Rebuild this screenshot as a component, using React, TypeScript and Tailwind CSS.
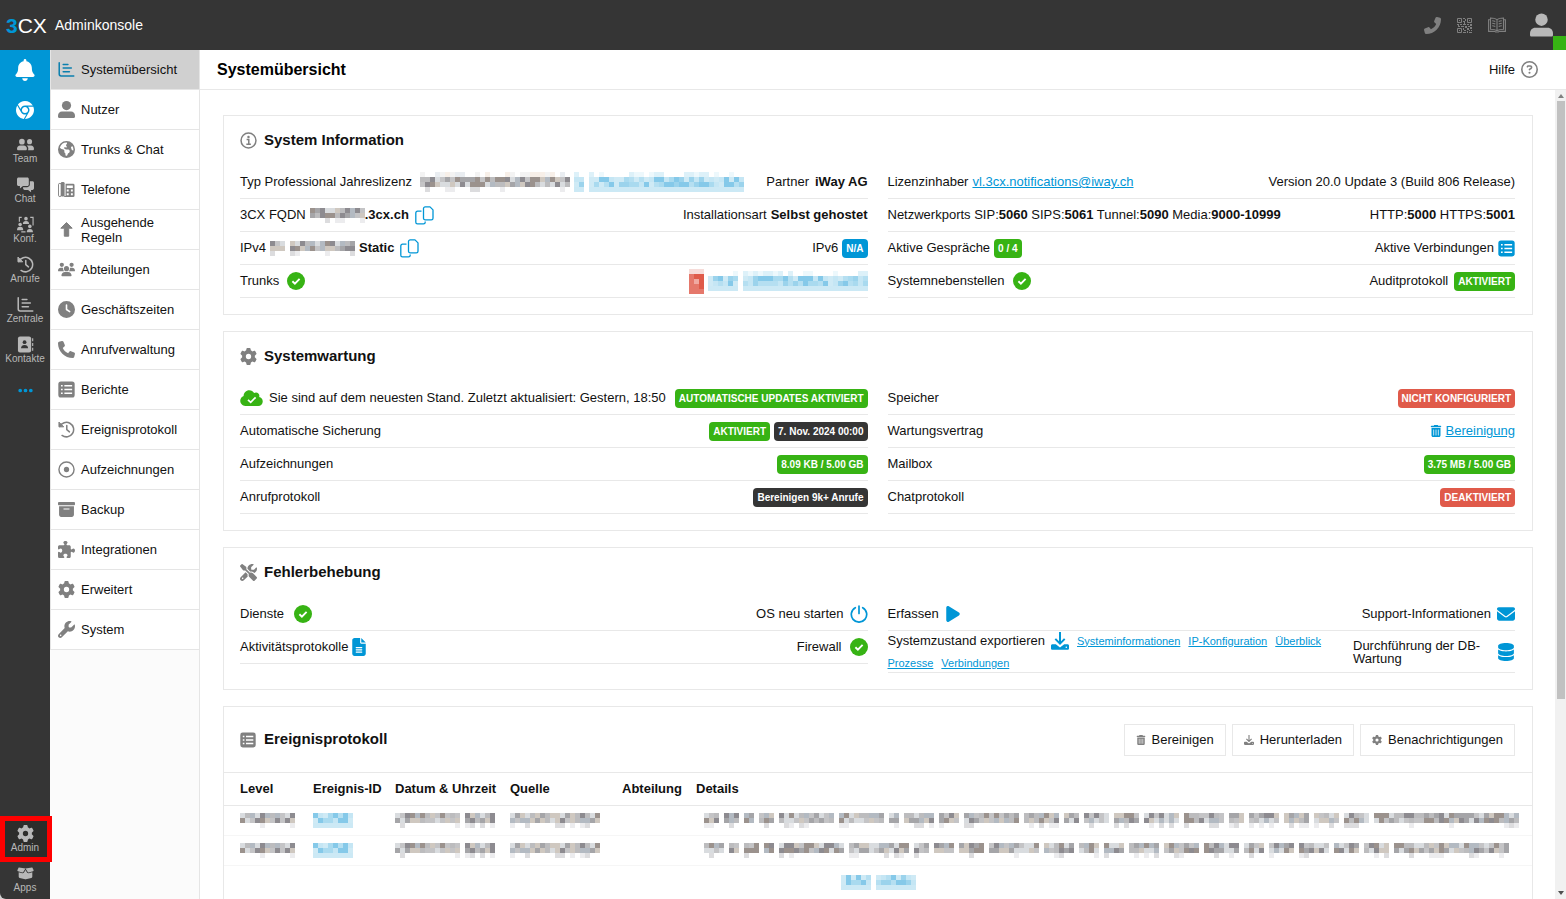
import type { ComponentType, ReactNode } from "react";
import {
  FaBell,
  FaBoxArchive,
  FaBoxOpen,
  FaChrome,
  FaClock,
  FaCloud,
  FaDatabase,
  FaEarthAmericas,
  FaEllipsis,
  FaEnvelope,
  FaFileLines,
  FaGear,
  FaPhone,
  FaPlay,
  FaPuzzlePiece,
  FaRegCircleQuestion,
  FaScrewdriverWrench,
  FaTrashCan,
  FaUsers,
  FaWrench,
} from "react-icons/fa6";

type IconProps = { className?: string };
type Icon = ComponentType<IconProps>;

/* ---------- icons ---------- */

function ChartIcon({ className }: IconProps) {
  return (
    <svg viewBox="0 0 18 18" className={className} fill="none" stroke="currentColor" strokeWidth="1.6" strokeLinecap="round" aria-hidden="true">
      <path d="M1.3 1.8v12a2 2 0 0 0 2 2h13.4M5.5 3.6h5M5.5 7.4h8.6M5.5 11.4h6.6" />
    </svg>
  );
}

function UserIcon({ className }: IconProps) {
  return (
    <svg viewBox="0 0 17 17" className={className} fill="currentColor" aria-hidden="true">
      <circle cx="8.5" cy="4.6" r="4.6" />
      <path d="M0 14.8C0 12.400 1.600 10.600 4 10.600h9c2.400 0 4 1.800 4 4.200v1c0 .7-.5 1.200-1.200 1.200H1.200C.5 17 0 16.500 0 15.800z" />
    </svg>
  );
}

function TeamIcon({ className }: IconProps) {
  return (
    <svg viewBox="0 0 18 18" className={className} fill="currentColor" aria-hidden="true">
      <circle cx="5.200" cy="6" r="3" />
      <path d="M0 13.700C0 11.500 1.400 10 3.400 10h3.700c2 0 3.400 1.500 3.400 3.700 0 .7-.5 1.300-1.200 1.300H1.200C.5 15 0 14.400 0 13.700z" />
      <circle cx="13.300" cy="6" r="2.700" />
      <path d="M10.300 10h4.500c1.900 0 3.200 1.500 3.200 3.700 0 .7-.5 1.300-1.200 1.300h-5.100c.7-1.900.2-3.900-1.400-5z" />
    </svg>
  );
}

function ChatIcon({ className }: IconProps) {
  return (
    <svg viewBox="0 0 18 18" className={className} fill="currentColor" aria-hidden="true">
      <path d="M1.700 1.500h9.200c.9 0 1.600.7 1.600 1.600v6c0 .9-.7 1.600-1.600 1.600H6.300l-3.200 2.500v-2.500H1.700C.8 10.700 0 10 0 9.100v-6c0-.9.8-1.600 1.700-1.600z" />
      <path d="M13.600 5.500h2.800c.9 0 1.600.7 1.600 1.600v6c0 .9-.7 1.600-1.600 1.600h-1.500v2.400l-3.200-2.400H8c-.9 0-1.600-.7-1.600-1.600v-1.300h4.500c1.500 0 2.700-1.200 2.700-2.700z" />
    </svg>
  );
}

function HistoryIcon({ className }: IconProps) {
  return (
    <svg viewBox="0 0 18 18" className={className} fill="none" stroke="currentColor" strokeWidth="1.600" strokeLinecap="round" strokeLinejoin="round" aria-hidden="true">
      <path d="M1.900 5.800A7.700 7.700 0 1 1 4.300 15.300" />
      <path d="M9.300 4.800v4.400l2.800 2.300" />
      <path d="M1 1.500v4.700h4.700z" fill="currentColor" strokeWidth="1" />
    </svg>
  );
}

function ContactsIcon({ className }: IconProps) {
  return (
    <svg viewBox="0 0 18 18" className={className} aria-hidden="true">
      <rect x="1" y="0.500" width="14" height="17" rx="2.200" fill="currentColor" />
      <path d="M16.600 2.500v3M16.600 7.500v3M16.600 12.500v3" stroke="currentColor" strokeWidth="1.200" />
      <circle cx="8" cy="6.600" r="2" fill="#353535" />
      <path d="M4.300 13c0-2 1-3.400 3.700-3.400s3.700 1.400 3.700 3.400z" fill="#353535" />
    </svg>
  );
}

function DeskPhoneIcon({ className }: IconProps) {
  return (
    <svg viewBox="0 0 18 18" className={className} aria-hidden="true">
      <rect x="0.500" y="2.500" width="3" height="14" rx="1.500" fill="none" stroke="currentColor" />
      <rect x="3" y="1" width="4" height="15.500" rx="1.400" fill="currentColor" />
      <path d="M8 3h8a1.500 1.500 0 0 1 1.500 1.500v11A1.500 1.500 0 0 1 16 17H6.500V16H8z" fill="currentColor" />
      <path d="M9.300 4.800h6.400v2.600H9.300zM9.300 9h2v2h-2zM13.700 9h2v2h-2zM9.300 13h2v2h-2zM13.700 13h2v2h-2z" fill="#fff" />
    </svg>
  );
}

function ConferenceIcon({ className }: IconProps) {
  return (
    <svg viewBox="0 0 18 18" className={className} fill="currentColor" aria-hidden="true">
      <circle cx="9.500" cy="2.800" r="1.900" />
      <path d="M6.200 8.500c0-2 1-3.200 3.300-3.200s3.300 1.200 3.300 3.200z" />
      <circle cx="3.300" cy="9" r="1.900" />
      <path d="M0 15c0-2.200 1-3.500 3.300-3.500S6.600 12.800 6.600 15z" />
      <circle cx="13.600" cy="11" r="1.900" />
      <path d="M10.300 17.200c0-2.200 1-3.500 3.300-3.500s3.300 1.300 3.300 3.500z" />
      <path d="M5 1.500H2.500V6M14 1.500h3V10M4.500 16.800H9" fill="none" stroke="currentColor" strokeWidth="1.200" />
    </svg>
  );
}

function ArrowUpIcon({ className }: IconProps) {
  return (
    <svg viewBox="0 0 17 17" className={className} fill="currentColor" stroke="currentColor" strokeLinejoin="round" aria-hidden="true">
      <path d="M8.500 1.500l5.700 5.700H10.700v8H6.300v-8H2.800z" />
    </svg>
  );
}

function ListIcon({ className }: IconProps) {
  return (
    <svg viewBox="0 0 16 16" className={className} aria-hidden="true">
      <rect x="0.300" y="0.500" width="15.400" height="15" rx="2.400" fill="currentColor" />
      <path d="M2.800 4.500h1.600M2.800 8h1.600M2.800 11.500h1.600M6 4.500h7.300M6 8h7.300M6 11.500h7.300" stroke="#fff" strokeWidth="1.400" />
    </svg>
  );
}

function RecordIcon({ className }: IconProps) {
  return (
    <svg viewBox="0 0 18 18" className={className} aria-hidden="true">
      <circle cx="9" cy="9" r="8" fill="none" stroke="currentColor" strokeWidth="1.500" />
      <circle cx="9" cy="9" r="2.800" fill="currentColor" />
    </svg>
  );
}

function InfoIcon({ className }: IconProps) {
  return (
    <svg viewBox="0 0 18 18" className={className} aria-hidden="true">
      <circle cx="9" cy="9" r="7.900" fill="none" stroke="currentColor" strokeWidth="1.600" />
      <circle cx="9" cy="5.200" r="1.300" fill="currentColor" />
      <path d="M7 8h2.300v4.600M6.700 13h4.800" fill="none" stroke="currentColor" strokeWidth="1.600" />
    </svg>
  );
}

function CopyIcon({ className }: IconProps) {
  return (
    <svg viewBox="0 0 19 19" className={className} fill="none" stroke="currentColor" strokeWidth="1.300" strokeLinejoin="round" aria-hidden="true">
      <path d="M10.200 .9h4.800l3 3v8.300a1.700 1.700 0 0 1-1.700 1.700h-6.100a1.700 1.700 0 0 1-1.700-1.700V2.600A1.700 1.700 0 0 1 10.200 .9z" />
      <path d="M6.500 5.200H2.500A1.700 1.700 0 0 0 .8 6.900v9.300a1.700 1.700 0 0 0 1.700 1.700h6a1.700 1.700 0 0 0 1.700-1.700v-.6" />
    </svg>
  );
}

function CheckIcon({ className }: IconProps) {
  return (
    <svg viewBox="0 0 18 18" className={className} aria-hidden="true">
      <circle cx="9" cy="9" r="9" fill="#37b314" />
      <path d="M5.400 9.200l2.500 2.400 4.700-4.700" fill="none" stroke="#fff" strokeWidth="1.900" />
    </svg>
  );
}

function PowerIcon({ className }: IconProps) {
  return (
    <svg viewBox="0 0 18 18" className={className} fill="none" stroke="currentColor" strokeWidth="1.700" strokeLinecap="round" aria-hidden="true">
      <path d="M9 1v7.500M5.300 2.700a7.700 7.700 0 1 0 7.400 0" />
    </svg>
  );
}

function DownloadIcon({ className }: IconProps) {
  return (
    <svg viewBox="0 0 18 18" className={className} aria-hidden="true">
      <path d="M9 0v11M4.300 6.900L9 11.600l4.700-4.700" fill="none" stroke="currentColor" strokeWidth="2" />
      <path d="M1.500 12.300h3.300L9 15.500l4.200-3.200h3.300c.8 0 1.500.6 1.500 1.400v2.700c0 .8-.7 1.400-1.500 1.400h-15C.7 17.800 0 17.200 0 16.400v-2.700c0-.8.7-1.400 1.500-1.400z" fill="currentColor" />
      <circle cx="15.300" cy="15.200" r=".8" fill="#fff" />
    </svg>
  );
}

function QrIcon({ className }: IconProps) {
  return (
    <svg viewBox="0 0 15 15" className={className} aria-hidden="true">
      <path d="M.5 .5h4v4h-4zM10.500 .5h4v4h-4zM.5 10.500h4v4h-4z" fill="none" stroke="currentColor" />
      <path
        d="M2 2h1v1H2zM12 2h1v1h-1zM2 12h1v1H2zM6 0h2v1H6zM8 1h1v2H8zM6 3h2v1H6zM7 4h1v2H7zM6 6h3v1H6zM0 6h2v1H0zM3 6h2v1H3zM1 7h1v2H1zM4 8h3v1H4zM2 8h1v1H2zM8 8h2v2H8zM10 6h2v1h-2zM13 6h2v2h-2zM11 8h2v1h-2zM6 10h1v2H6zM7 12h2v1H7zM6 14h3v1H6zM10 10h2v2h-2zM13 9h2v2h-2zM12 12h1v1h-1zM10 13h1v2h-1zM12 14h3v1h-3zM14 12h1v1h-1z"
        fill="currentColor"
      />
    </svg>
  );
}

function BookIcon({ className }: IconProps) {
  return (
    <svg viewBox="0 0 18 18" className={className} fill="none" stroke="currentColor" strokeWidth="1.100" aria-hidden="true">
      <path d="M9 3.600C7.500 2.300 5.300 2 2.500 2v11.300c2.800 0 5 .3 6.500 1.500 1.500-1.200 3.700-1.500 6.500-1.500V2c-2.800 0-5 .3-6.500 1.600zM9 3.600v11.200" />
      <path d="M2.500 3.800H.6v11.600H7c.4.800 3.600.8 4 0h6.400V3.800h-1.900" />
      <path d="M4.200 4.800c1.200 0 2.200.2 3.100.6M4.200 7.300c1.200 0 2.200.2 3.100.6M4.200 9.800c1.200 0 2.200.2 3.100.6M13.800 4.800c-1.200 0-2.200.2-3.100.6M13.800 7.300c-1.200 0-2.200.2-3.100.6M13.800 9.800c-1.200 0-2.200.2-3.100.6" />
    </svg>
  );
}

/* ---------- masked text ---------- */

const TONES = {
  gray: {
    faint: ["#f3f3f3", "#e9edf1", "#f7efe8", "#ffffff", "#ffffff"],
    strong: ["#a5a5a8", "#bcbcbe", "#8d8b90", "#cfc8c0", "#b3bac2", "#d9dcdf", "#9b928d", "#c4c4c6"],
    tail: ["#ffffff", "#ffffff", "#ffffff", "#ffffff", "#ececee", "#ffffff", "#dcdcde"],
  },
  blue: {
    faint: ["#edf8fc", "#ffffff", "#ddf1f9", "#ffffff"],
    strong: ["#9bd3ec", "#b5dff1", "#c5e6f4", "#85c9e9", "#a9daef", "#cfeaf5"],
    tail: ["#cce9f5"],
  },
};

type MaskedProps = { words: number[]; tone?: "gray" | "blue"; rows?: number; seed?: number };

function Masked({ words, tone = "gray", rows = 3, seed = 1 }: MaskedProps) {
  const cells: ReactNode[] = [];
  const palette = TONES[tone];
  let state = seed * 7919 + 13;
  const pick = (list: string[]) => {
    state = (state * 1103515245 + 12345) % 2147483648;
    return list[Math.floor(state / 65536) % list.length];
  };
  let col = 0;
  words.forEach((length) => {
    for (let i = 0; i < length; i++) {
      for (let row = 0; row < rows; row++) {
        const kind = rows === 4 && row === 0 ? palette.faint : row === rows - 1 ? palette.tail : palette.strong;
        cells.push(<rect key={`${col}-${row}`} x={col * 5} y={row * 5} width="5" height="5" fill={pick(kind)} />);
      }
      col++;
    }
    col++;
  });
  const width = (col - 1) * 5;
  return (
    <svg width={width} height={rows * 5} viewBox={`0 0 ${width} ${rows * 5}`} shapeRendering="crispEdges" className="inline-block shrink-0" aria-hidden="true">
      {cells}
    </svg>
  );
}

/* ---------- shared pieces ---------- */

const BADGE_COLORS = {
  green: "bg-[#37b314]",
  red: "bg-[#e05a4a]",
  blue: "bg-[#0096d6]",
  dark: "bg-[#353535]",
};

function Badge({ color, children }: { color: keyof typeof BADGE_COLORS; children: ReactNode }) {
  return (
    <span className={`${BADGE_COLORS[color]} flex h-[19px] shrink-0 items-center rounded px-1 text-[10px] font-bold whitespace-nowrap text-white`}>
      {children}
    </span>
  );
}

function Row({ left, right }: { left: ReactNode; right?: ReactNode }) {
  return (
    <div className="flex h-[33px] items-center justify-between border-b border-[#e8e8e8] whitespace-nowrap">
      <div className="flex items-center gap-1">{left}</div>
      <div className="flex items-center gap-1">{right}</div>
    </div>
  );
}

function Card({ icon: CardIcon, title, children }: { icon: Icon; title: string; children: ReactNode }) {
  return (
    <section className="border border-[#e8e8e8] bg-white pr-[17px] pb-4 pl-4">
      <h2 className="mb-0.5 flex h-12 items-center gap-[7px] text-[15px] font-bold">
        <CardIcon className="size-[17px] text-[#808080]" />
        {title}
      </h2>
      <div className="grid grid-cols-2 gap-5">{children}</div>
    </section>
  );
}

function TextLink({ children }: { children: ReactNode }) {
  return (
    <a href="#" className="text-[#0096d6] underline">
      {children}
    </a>
  );
}

function IconButton({ label, icon: ButtonIcon, className }: { label: string; icon: Icon; className: string }) {
  return (
    <button type="button" aria-label={label} className="shrink-0 text-[#0096d6]">
      <ButtonIcon className={className} />
    </button>
  );
}

/* ---------- navigation ---------- */

const RAIL: { label: string; icon: Icon }[] = [
  { label: "Team", icon: TeamIcon },
  { label: "Chat", icon: ChatIcon },
  { label: "Konf.", icon: ConferenceIcon },
  { label: "Anrufe", icon: HistoryIcon },
  { label: "Zentrale", icon: ChartIcon },
  { label: "Kontakte", icon: ContactsIcon },
];

const MENU: { label: string; icon: Icon }[] = [
  { label: "Systemübersicht", icon: ChartIcon },
  { label: "Nutzer", icon: UserIcon },
  { label: "Trunks & Chat", icon: FaEarthAmericas },
  { label: "Telefone", icon: DeskPhoneIcon },
  { label: "Ausgehende Regeln", icon: ArrowUpIcon },
  { label: "Abteilungen", icon: FaUsers },
  { label: "Geschäftszeiten", icon: FaClock },
  { label: "Anrufverwaltung", icon: FaPhone },
  { label: "Berichte", icon: ListIcon },
  { label: "Ereignisprotokoll", icon: HistoryIcon },
  { label: "Aufzeichnungen", icon: RecordIcon },
  { label: "Backup", icon: FaBoxArchive },
  { label: "Integrationen", icon: FaPuzzlePiece },
  { label: "Erweitert", icon: FaGear },
  { label: "System", icon: FaWrench },
];

function RailItem({ label, icon: ItemIcon }: { label: string; icon: Icon }) {
  return (
    <a href="#" className="flex h-10 flex-col items-center pt-1.5 text-[10px] leading-3 text-[#b8b8b8]">
      <ItemIcon className="size-[17px]" />
      {label}
    </a>
  );
}

function Header() {
  return (
    <header className="flex h-[50px] shrink-0 items-center bg-[#353535] pl-1.5 text-white">
      <span className="w-[49px] text-[21px] leading-none whitespace-nowrap">
        <b className="text-[#0096d6]">3</b>CX
      </span>
      <span className="text-sm">Adminkonsole</span>
      <div className="ml-auto flex items-center text-[#808080]">
        <button type="button" aria-label="Telefon" className="mr-4">
          <FaPhone className="size-[17px] -scale-x-100" />
        </button>
        <button type="button" aria-label="QR-Code" className="mr-4">
          <QrIcon className="size-[15px]" />
        </button>
        <button type="button" aria-label="Handbuch" className="mr-6">
          <BookIcon className="size-[18px]" />
        </button>
        <button type="button" aria-label="Profil" className="relative flex h-[50px] w-9 items-center text-[#b8b8b8]">
          <UserIcon className="h-[26px] w-[23px]" />
          <span className="absolute right-0 bottom-0 h-3.5 w-[13px] bg-[#37b314]" />
        </button>
      </div>
    </header>
  );
}

function Rail() {
  return (
    <nav aria-label="Module" className="relative flex w-[50px] shrink-0 flex-col rounded-bl-md bg-[#353535]">
      <a href="#" aria-label="Mitteilungen" className="flex h-10 items-center justify-center bg-[#0096d6] text-white">
        <FaBell className="h-[22px] w-5" />
      </a>
      <a href="#" aria-label="Chrome" className="flex h-10 items-center justify-center bg-[#0096d6] text-white">
        <FaChrome className="size-[18px]" />
      </a>
      {RAIL.map((item) => (
        <RailItem key={item.label} {...item} />
      ))}
      <a href="#" aria-label="Mehr" className="flex h-10 items-center justify-center text-[#0096d6]">
        <FaEllipsis className="size-[17px]" />
      </a>
      <div className="mt-auto">
        <div className="relative">
          <span className="absolute -top-[3px] left-0 h-[46px] w-[52px] border-[5px] border-[#ff0000] bg-[#2d2d2b]" />
          <div className="relative">
            <RailItem label="Admin" icon={FaGear} />
          </div>
        </div>
        <RailItem label="Apps" icon={FaBoxOpen} />
      </div>
    </nav>
  );
}

function Sidebar() {
  return (
    <nav aria-label="Adminkonsole" className="w-[150px] shrink-0 border-r border-[#e5e5e5] bg-[#fbfbfb]">
      {MENU.map(({ label, icon: ItemIcon }, index) => (
        <a
          key={label}
          href="#"
          className={`flex h-10 items-center gap-1.5 border-b border-l border-[#e5e5e5] pl-[7px] text-[13px] leading-[15px] ${index === 0 ? "bg-[#d0d0d0]" : "bg-white"}`}
        >
          <ItemIcon className={`size-[17px] shrink-0 ${index === 0 ? "text-[#0b7fae]" : "text-[#808080]"}`} />
          <span className="w-[100px]">{label}</span>
        </a>
      ))}
    </nav>
  );
}

/* ---------- dashboard ---------- */

function SystemInfo() {
  return (
    <Card icon={InfoIcon} title="System Information">
      <div>
        <Row
          left={
            <>
              <span className="mr-1">Typ Professional Jahreslizenz</span>
              <Masked words={[30]} rows={4} seed={3} />
              <Masked words={[2, 31]} rows={4} tone="blue" seed={5} />
            </>
          }
          right={
            <>
              <span className="mr-0.5">Partner</span> <b>iWay AG</b>
            </>
          }
        />
        <Row
          left={
            <>
              <span>3CX FQDN</span>
              <span className="flex items-center">
                <Masked words={[11]} seed={9} />
                <b>.3cx.ch</b>
              </span>
              <IconButton label="FQDN kopieren" icon={CopyIcon} className="ml-0.5 size-[19px]" />
            </>
          }
          right={
            <>
              <span>Installationsart</span> <b>Selbst gehostet</b>
            </>
          }
        />
        <Row
          left={
            <>
              <span>IPv4</span>
              <Masked words={[3, 13]} seed={12} />
              <b>Static</b>
              <IconButton label="IPv4 kopieren" icon={CopyIcon} className="ml-0.5 size-[19px]" />
            </>
          }
          right={
            <>
              <span>IPv6</span> <Badge color="blue">N/A</Badge>
            </>
          }
        />
        <Row
          left={
            <>
              <span className="mr-1">Trunks</span> <CheckIcon className="size-[18px]" />
            </>
          }
          right={
            <>
              <svg width="15" height="25" viewBox="0 0 15 25" shapeRendering="crispEdges" aria-hidden="true">
                <path d="M0 0h15v5H0z" fill="#f6dcd9" />
                <path d="M0 5h15v20H0z" fill="#e5786b" />
                <path d="M5 5h10v5H5zM10 10h5v10h-5z" fill="#df5b4a" />
                <path d="M5 10h5v5H5z" fill="#f0a9a1" />
              </svg>
              <Masked words={[6, 25]} rows={4} tone="blue" seed={21} />
            </>
          }
        />
      </div>
      <div>
        <Row
          left={
            <>
              <span>Lizenzinhaber</span> <TextLink>vl.3cx.notifications@iway.ch</TextLink>
            </>
          }
          right="Version 20.0 Update 3 (Build 806 Release)"
        />
        <Row
          left={
            <span>
              Netzwerkports SIP:<b>5060</b> SIPS:<b>5061</b> Tunnel:<b>5090</b> Media:<b>9000-10999</b>
            </span>
          }
          right={
            <span>
              HTTP:<b>5000</b> HTTPS:<b>5001</b>
            </span>
          }
        />
        <Row
          left={
            <>
              <span>Aktive Gespräche</span> <Badge color="green">0 / 4</Badge>
            </>
          }
          right={
            <>
              <span>Aktive Verbindungen</span>
              <IconButton label="Aktive Verbindungen anzeigen" icon={ListIcon} className="size-[17px]" />
            </>
          }
        />
        <Row
          left={
            <>
              <span className="mr-1">Systemnebenstellen</span> <CheckIcon className="size-[18px]" />
            </>
          }
          right={
            <>
              <span className="mr-0.5">Auditprotokoll</span> <Badge color="green">AKTIVIERT</Badge>
            </>
          }
        />
      </div>
    </Card>
  );
}

function Maintenance() {
  return (
    <Card icon={FaGear} title="Systemwartung">
      <div>
        <Row
          left={
            <>
              <span className="relative mr-0.5 text-[#37b314]">
                <FaCloud className="h-[18px] w-[23px]" />
                <svg viewBox="0 0 10 8" className="absolute top-[7px] left-[7px] h-2 w-2.5" fill="none" stroke="#fff" strokeWidth="1.7" aria-hidden="true">
                  <path d="M1 3.800l2.700 2.600L8.600 1.300" />
                </svg>
              </span>
              <span>Sie sind auf dem neuesten Stand. Zuletzt aktualisiert: Gestern, 18:50</span>
            </>
          }
          right={<Badge color="green">AUTOMATISCHE UPDATES AKTIVIERT</Badge>}
        />
        <Row
          left="Automatische Sicherung"
          right={
            <>
              <Badge color="green">AKTIVIERT</Badge> <Badge color="dark">7. Nov. 2024 00:00</Badge>
            </>
          }
        />
        <Row left="Aufzeichnungen" right={<Badge color="green">8.09 KB / 5.00 GB</Badge>} />
        <Row left="Anrufprotokoll" right={<Badge color="dark">Bereinigen 9k+ Anrufe</Badge>} />
      </div>
      <div>
        <Row left="Speicher" right={<Badge color="red">NICHT KONFIGURIERT</Badge>} />
        <Row
          left="Wartungsvertrag"
          right={
            <>
              <FaTrashCan className="size-3 text-[#0096d6]" /> <TextLink>Bereinigung</TextLink>
            </>
          }
        />
        <Row left="Mailbox" right={<Badge color="green">3.75 MB / 5.00 GB</Badge>} />
        <Row left="Chatprotokoll" right={<Badge color="red">DEAKTIVIERT</Badge>} />
      </div>
    </Card>
  );
}

const EXPORTS = ["Systeminformationen", "IP-Konfiguration", "Überblick", "Prozesse", "Verbindungen"];

function Troubleshooting() {
  return (
    <Card icon={FaScrewdriverWrench} title="Fehlerbehebung">
      <div>
        <Row
          left={
            <>
              <span className="mr-1.5">Dienste</span> <CheckIcon className="size-[18px]" />
            </>
          }
          right={
            <>
              <span>OS neu starten</span>
              <IconButton label="OS neu starten" icon={PowerIcon} className="ml-0.5 size-[18px]" />
            </>
          }
        />
        <Row
          left={
            <>
              <span>Aktivitätsprotokolle</span>
              <IconButton label="Aktivitätsprotokolle öffnen" icon={FaFileLines} className="h-[18px] w-[14px]" />
            </>
          }
          right={
            <>
              <span className="mr-1">Firewall</span> <CheckIcon className="size-[18px]" />
            </>
          }
        />
      </div>
      <div>
        <Row
          left={
            <>
              <span className="mr-0.5">Erfassen</span>
              <IconButton label="Erfassung starten" icon={FaPlay} className="h-[18px] w-4" />
            </>
          }
          right={
            <>
              <span className="mr-0.5">Support-Informationen</span>
              <IconButton label="Support-Informationen senden" icon={FaEnvelope} className="size-[18px]" />
            </>
          }
        />
        <div className="flex h-[42px] items-center border-b border-[#e8e8e8]">
          <div className="flex flex-1 flex-wrap items-center leading-[22px]">
            <span className="mr-1.5">Systemzustand exportieren</span>
            <DownloadIcon className="mr-2 size-[18px] text-[#0096d6]" />
            {EXPORTS.map((name) => (
              <a key={name} href="#" className="mr-2 text-[11px] text-[#0096d6] underline">
                {name}
              </a>
            ))}
          </div>
          <span className="mr-1 ml-4 w-[140px] leading-[13px]">Durchführung der DB-Wartung</span>
          <IconButton label="DB-Wartung starten" icon={FaDatabase} className="size-[18px]" />
        </div>
      </div>
    </Card>
  );
}

const LOG_ACTIONS: { label: string; icon: Icon }[] = [
  { label: "Bereinigen", icon: FaTrashCan },
  { label: "Herunterladen", icon: DownloadIcon },
  { label: "Benachrichtigungen", icon: FaGear },
];

const LOG_ROWS = [
  [3, 3, 2, 3, 11, 9, 2, 6, 4, 11, 7, 3, 5, 5, 7, 8, 3, 6, 5, 5, 5, 29],
  [4, 2, 3, 2, 13, 12, 3, 4, 5, 10, 6, 4, 4, 6, 7, 7, 4, 5, 6, 5, 5, 23],
];

function EventLog() {
  return (
    <section className="border border-[#e8e8e8] bg-white pb-6">
      <div className="flex h-[65px] items-center justify-between pr-[17px] pl-4">
        <h2 className="flex items-center gap-2 text-[15px] font-bold">
          <ListIcon className="size-4 text-[#808080]" />
          Ereignisprotokoll
        </h2>
        <div className="flex gap-1.5">
          {LOG_ACTIONS.map(({ label, icon: ActionIcon }) => (
            <button key={label} type="button" className="flex h-8 items-center gap-1.5 border border-[#e8e8e8] px-[11px]">
              <ActionIcon className="size-2.5 text-[#808080]" />
              {label}
            </button>
          ))}
        </div>
      </div>
      <table className="w-full table-fixed border-t border-[#e8e8e8] text-left">
        <thead>
          <tr className="h-[33px] border-b border-[#e8e8e8]">
            <th scope="col" className="w-[89px] pl-4">Level</th>
            <th scope="col" className="w-[82px]">Ereignis-ID</th>
            <th scope="col" className="w-[115px]">Datum &amp; Uhrzeit</th>
            <th scope="col" className="w-[112px]">Quelle</th>
            <th scope="col" className="w-[74px]">Abteilung</th>
            <th scope="col">Details</th>
          </tr>
        </thead>
        <tbody>
          {LOG_ROWS.map((words, index) => (
            <tr key={index} className="h-[30px] border-b border-[#f6f6f6] [&_svg]:block">
              <td className="pl-4"><Masked words={[11]} seed={31} /></td>
              <td><Masked words={[8]} tone="blue" seed={33} /></td>
              <td><Masked words={[13, 6]} seed={35} /></td>
              <td><Masked words={[18]} seed={37} /></td>
              <td />
              <td className="overflow-hidden pl-2"><Masked words={words} seed={41 + index} /></td>
            </tr>
          ))}
        </tbody>
      </table>
      <div className="flex h-8 items-center justify-center">
        <Masked words={[6, 8]} tone="blue" seed={51} />
      </div>
    </section>
  );
}

function ScrollBar() {
  return (
    <div className="flex w-[11px] shrink-0 flex-col items-center bg-[#f1f1f1] py-1" aria-hidden="true">
      <svg viewBox="0 0 6 4" className="mb-[3px] h-1 w-1.5 fill-[#808080]"><path d="M3 0l3 4H0z" /></svg>
      <div className="w-2 flex-[598] bg-[#c1c1c1]" />
      <div className="flex-[192]" />
      <svg viewBox="0 0 6 4" className="h-1 w-1.5 fill-[#505050]"><path d="M3 4l3-4H0z" /></svg>
    </div>
  );
}

export default function App() {
  return (
    <div className="flex h-screen flex-col overflow-hidden bg-white font-['Liberation_Sans',Arial,sans-serif] text-[13px] leading-normal text-[#111]">
      <Header />
      <div className="flex min-h-0 flex-1">
        <div className="z-10 flex bg-[#d0d0d0]">
          <Rail />
        </div>
        <Sidebar />
        <main className="flex min-w-0 flex-1 flex-col">
          <div className="flex h-10 shrink-0 items-center justify-between border-b border-[#e8e8e8] pr-7 pl-[17px]">
            <h1 className="text-base font-bold text-black">Systemübersicht</h1>
            <a href="#" className="flex items-center gap-1.5">
              Hilfe <FaRegCircleQuestion className="size-[17px] text-[#808080]" />
            </a>
          </div>
          <div className="flex min-h-0 flex-1">
            <div className="flex min-w-0 flex-1 flex-col gap-4 overflow-hidden pt-[25px] pr-[22px] pl-[23px] *:shrink-0">
              <SystemInfo />
              <Maintenance />
              <Troubleshooting />
              <EventLog />
            </div>
            <ScrollBar />
          </div>
        </main>
      </div>
    </div>
  );
}
